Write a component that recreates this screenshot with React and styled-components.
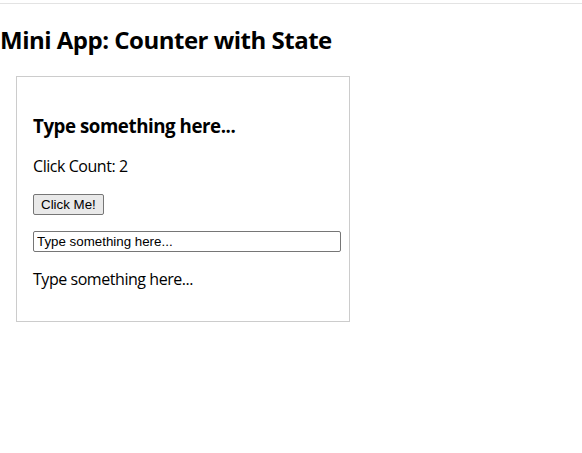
import { useState } from "react";
import styled, { createGlobalStyle } from "styled-components";

const GlobalStyle = createGlobalStyle`
  body {
    margin: 0;
    font-family: "Segoe UI", "Open Sans", sans-serif;
    letter-spacing: -0.028em;
    color: #000;
    background: #fff;
  }
`;

const TopRule = styled.div`
  height: 3px;
  border-bottom: 1px solid #e3e3e3;
`;

const Title = styled.h2`
  font-size: 24px;
  font-weight: 700;
  margin: 20px 0;
  line-height: 32px;
  letter-spacing: -0.5px;
`;

const Card = styled.div`
  width: 300px;
  margin: 16px;
  padding: 16px;
  border: 1px solid #ccc;
`;

const Heading = styled.h3`
  font-size: 18.72px;
  margin: 18.72px 0;
  line-height: 25px;
  padding-top: 1px;
  height: 24px;
`;

const Text = styled.p`
  font-size: 16px;
  margin: 16px 0;
  line-height: 21px;
  padding-top: ${({ $nudge }) => ($nudge ? "1px" : "0")};
  height: ${({ $nudge }) => ($nudge ? "20px" : "auto")};
`;

const Button = styled.button`
  display: block;
  box-sizing: border-box;
  height: 21px;
  margin: 18px 0 0;
  font-family: "Liberation Sans", Arial, sans-serif;
  font-size: 13.33px;
  letter-spacing: normal;
  padding: 1px 7px;
  background: #e9e9e9;
  border: 1px solid #767676;
  border-radius: 2px;
  color: #000;
`;

const Field = styled.input`
  display: block;
  box-sizing: content-box;
  width: 100%;
  height: 17px;
  font-family: "Liberation Sans", Arial, sans-serif;
  font-size: 13.33px;
  letter-spacing: normal;
  padding: 1px 3px;
  border: 1px solid #767676;
  border-radius: 2px;
  margin: 0;
  color: #000;
`;

const InputRow = styled.div`
  margin: 16px 0 0;
`;

const App = () => {
  const [count, setCount] = useState(2);
  const [text, setText] = useState("Type something here...");

  return (
    <>
      <GlobalStyle />
      <TopRule />
      <Title>Mini App: Counter with State</Title>
      <Card>
        <Heading>{text}</Heading>
        <Text $nudge>Click Count: {count}</Text>
        <Button onClick={() => setCount(count + 1)}>Click Me!</Button>
        <InputRow>
          <Field value={text} onChange={(e) => setText(e.target.value)} />
        </InputRow>
        <Text $nudge>{text}</Text>
      </Card>
    </>
  );
};

export default App;
